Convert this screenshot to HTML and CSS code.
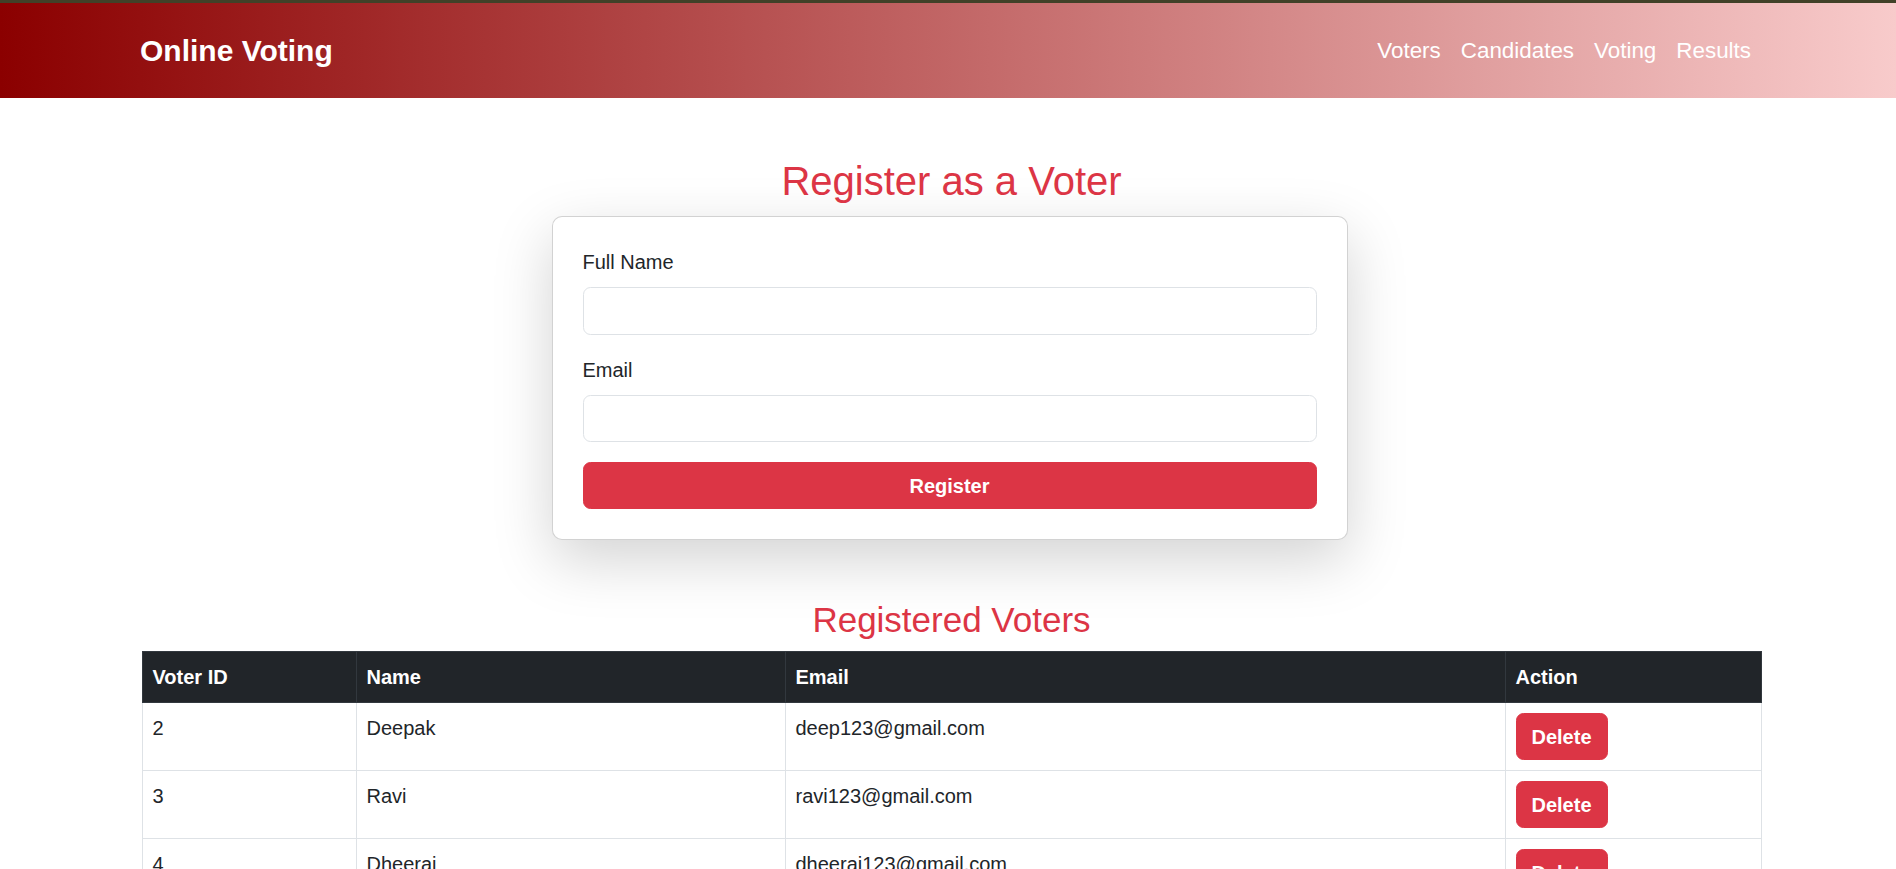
FILE: index.html
```html
<!DOCTYPE html>
<html lang="en">
<head>
<meta charset="utf-8">
<title>Online Voting</title>
<link rel="stylesheet" href="styles.css">
</head>
<body>
<div class="topline"></div>
<header class="navbar">
  <div class="container nav-inner">
    <a class="brand" href="#">Online Voting</a>
    <nav class="nav-links">
      <a href="#">Voters</a>
      <a href="#">Candidates</a>
      <a href="#">Voting</a>
      <a href="#">Results</a>
    </nav>
  </div>
</header>
<main class="main">
  <h2 class="title">Register as a Voter</h2>
  <div class="card">
    <div class="field">
      <label class="label">Full Name</label>
      <input class="input" type="text">
    </div>
    <div class="field">
      <label class="label">Email</label>
      <input class="input" type="email">
    </div>
    <button class="btn btn-block">Register</button>
  </div>
  <h3 class="subtitle">Registered Voters</h3>
  <table class="table">
    <thead>
      <tr><th class="c-id">Voter ID</th><th class="c-name">Name</th><th class="c-email">Email</th><th class="c-act">Action</th></tr>
    </thead>
    <tbody>
      <tr><td>2</td><td>Deepak</td><td>deep123@gmail.com</td><td><button class="btn">Delete</button></td></tr>
      <tr><td>3</td><td>Ravi</td><td>ravi123@gmail.com</td><td><button class="btn">Delete</button></td></tr>
      <tr><td>4</td><td>Dheeraj</td><td>dheeraj123@gmail.com</td><td><button class="btn">Delete</button></td></tr>
      <tr><td>5</td><td>Amit</td><td>amit123@gmail.com</td><td><button class="btn">Delete</button></td></tr>
    </tbody>
  </table>
</main>
</body>
</html>
```
FILE: styles.css
```css
* { box-sizing: border-box; }
html, body { margin: 0; padding: 0; }
body {
  font-family: "Liberation Sans", Arial, sans-serif;
  font-size: 20px;
  line-height: 1.5;
  color: #212529;
  background: #fff;
}
.topline { height: 3px; background: #414128; }
.navbar {
  height: 95px;
  background: linear-gradient(to right, #8b0000, #f8cbcb);
  display: flex;
  align-items: center;
}
.container {
  width: 1620px;
  margin: 0 auto;
}
.nav-inner {
  display: flex;
  align-items: center;
  justify-content: space-between;
}
.brand {
  color: #fff;
  font-weight: bold;
  font-size: 30px;
  text-decoration: none;
  margin-left: 2px;
}
.nav-links { display: flex; margin-right: -3px; }
.nav-links a {
  color: #fff;
  text-decoration: none;
  font-size: 22.4px;
  padding: 0 10px;
}
.main {
  width: 1620px;
  margin-left: calc(50% - 806.5px);
  padding-top: 59px;
}
.title {
  margin: 0 0 11px;
  text-align: center;
  color: #dc3545;
  font-weight: normal;
  font-size: 40px;
  line-height: 1.2;
}
.card {
  width: 796px;
  margin: 0 0 59px calc(50% - 400px);
  background: #fff;
  border: 1px solid rgba(0,0,0,0.175);
  border-radius: 10px;
  padding: 30px;
  box-shadow: 0 20px 60px rgba(0,0,0,0.175);
}
.field { margin-bottom: 20px; }
.label {
  display: block;
  margin-bottom: 10px;
}
.input {
  display: block;
  width: 100%;
  height: 47.5px;
  border: 1px solid #dee2e6;
  border-radius: 7.5px;
  font: inherit;
  padding: 7.5px 15px;
}
.btn {
  background: #dc3545;
  color: #fff;
  border: 1px solid #dc3545;
  border-radius: 7.5px;
  font-family: "Liberation Sans", Arial, sans-serif;
  font-size: 20px;
  font-weight: bold;
  line-height: 1.5;
  padding: 7.5px 15px;
}
.btn-block { display: block; width: 100%; }
.subtitle {
  margin: 0 0 10px;
  text-align: center;
  color: #dc3545;
  font-weight: normal;
  font-size: 35px;
  line-height: 1.2;
}
.table {
  width: 100%;
  border-collapse: collapse;
}
.table th, .table td {
  border: 1px solid #dee2e6;
  padding: 10px;
  text-align: left;
  vertical-align: top;
}
.table thead th {
  background: #212529;
  color: #fff;
  font-weight: bold;
  border-color: #32383e;
}
.c-id { width: 214px; }
.c-name { width: 429px; }
.c-email { width: 720px; }
```
